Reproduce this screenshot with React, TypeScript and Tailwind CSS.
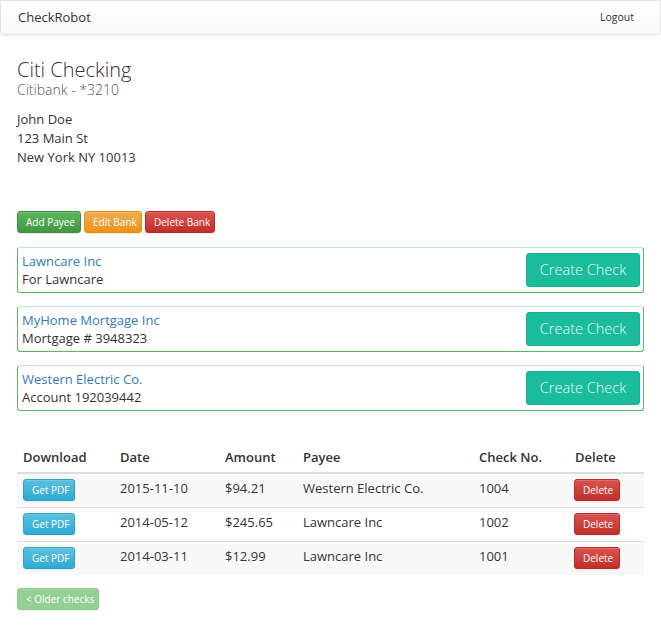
import React from "react";

const payees = [
    { name: "Lawncare Inc", memo: "For Lawncare" },
    { name: "MyHome Mortgage Inc", memo: "Mortgage # 3948323" },
    { name: "Western Electric Co.", memo: "Account 192039442" },
];

const checks = [
    { date: "2015-11-10", amount: "$94.21", payee: "Western Electric Co.", num: "1004" },
    { date: "2014-05-12", amount: "$245.65", payee: "Lawncare Inc", num: "1002" },
    { date: "2014-03-11", amount: "$12.99", payee: "Lawncare Inc", num: "1001" },
];

const btnXs = "h-[22px] px-[8px] text-[10px] leading-none whitespace-nowrap rounded-[3px] border text-white shadow-[inset_0_1px_0_rgba(255,255,255,0.15),0_1px_1px_rgba(0,0,0,0.075)]";

export default function App() {
    return (
        <div className="min-h-[634px] bg-white text-[#333] font-['Open_Sans',sans-serif]">
            {/* Navbar */}
            <div className="h-[35px] flex items-center justify-between border border-[#e2e2e2] rounded-b-[4px] bg-gradient-to-b from-white to-[#f8f8f8] shadow-[0_1px_3px_rgba(0,0,0,0.06)] pl-[17px] pr-[26px]">
                <span className="text-[13px] text-[#333]">CheckRobot</span>
                <span className="text-[10.5px] text-[#333]">Logout</span>
            </div>

            <div className="pl-[17px] pr-[17px]">
                {/* Account heading */}
                <div className="pt-[24px]">
                    <h1 className="text-[20px] font-light leading-[22px] text-[#333]">Citi Checking</h1>
                    <p className="text-[14px] font-light leading-[18px] text-[#5d534c]">Citibank - *3210</p>
                </div>
                <div className="mt-[11px] text-[13px] leading-[19px] text-[#333]">
                    <p>John Doe</p>
                    <p>123 Main St</p>
                    <p>New York NY 10013</p>
                </div>

                {/* Actions */}
                <div className="mt-[44px] flex gap-[3px]">
                    <button className={`${btnXs} bg-gradient-to-b from-[#5cb85c] to-[#419641] border-[#3e8f3e] w-[64px] px-0`}>Add Payee</button>
                    <button className={`${btnXs} bg-gradient-to-b from-[#f0ad4e] to-[#eb9316] border-[#e38d13] w-[58px] px-0`}>Edit Bank</button>
                    <button className={`${btnXs} bg-gradient-to-b from-[#d9534f] to-[#c12e2a] border-[#b92c28] w-[70px] px-0`}>Delete Bank</button>
                </div>

                {/* Payees */}
                <div className="mt-[14px] flex flex-col gap-[13px]">
                    {payees.map((p) => (
                        <div key={p.name} className="h-[46px] flex items-center justify-between border border-[#5cb85c] border-t-[#c3e9d0] rounded-[3px] pl-[4px] pr-[3px]">
                            <div className="text-[13px] leading-[18px]">
                                <p className="text-[#337ab7]">{p.name}</p>
                                <p className="text-[#333]">{p.memo}</p>
                            </div>
                            <button className="h-[34px] w-[114px] rounded-[3px] bg-[#1abc9c] border border-[#19b191] text-[14.5px] font-light text-[#eafaf6]">Create Check</button>
                        </div>
                    ))}
                </div>

                {/* Checks table */}
                <table className="mt-[36px] w-full text-[13px] border-collapse">
                    <thead>
                        <tr className="h-[26px] border-b-2 border-[#ddd] text-left">
                            <th className="w-[97px] pl-[6px] font-semibold align-bottom pb-[5px]">Download</th>
                            <th className="w-[105px] pl-[6px] font-semibold align-bottom pb-[5px]">Date</th>
                            <th className="w-[78px] pl-[6px] font-semibold align-bottom pb-[5px]">Amount</th>
                            <th className="w-[176px] pl-[6px] font-semibold align-bottom pb-[5px]">Payee</th>
                            <th className="w-[96px] pl-[6px] font-semibold align-bottom pb-[5px]">Check No.</th>
                            <th className="pl-[6px] font-semibold align-bottom pb-[5px]">Delete</th>
                        </tr>
                    </thead>
                    <tbody>
                        {checks.map((c, i) => (
                            <tr key={c.num} className={`h-[34px] border-t border-[#ddd] ${i % 2 === 0 ? "bg-[#f9f9f9]" : "bg-white"}`}>
                                <td className="pl-[6px] align-top pt-[5px]">
                                    <button className={`${btnXs} bg-gradient-to-b from-[#5bc0de] to-[#2aabd2] border-[#28a4c9] w-[52px] px-0`}>Get PDF</button>
                                </td>
                                <td className="pl-[6px] align-top pt-[5px]">{c.date}</td>
                                <td className="pl-[6px] align-top pt-[5px]">{c.amount}</td>
                                <td className="pl-[6px] align-top pt-[5px]">{c.payee}</td>
                                <td className="pl-[6px] align-top pt-[5px]">{c.num}</td>
                                <td className="pl-[5px] align-top pt-[5px]">
                                    <button className={`${btnXs} bg-gradient-to-b from-[#d9534f] to-[#c12e2a] border-[#b92c28] w-[46px] px-0`}>Delete</button>
                                </td>
                            </tr>
                        ))}
                    </tbody>
                </table>

                <button className={`${btnXs} mt-[13px] bg-[#5cb85c] border-[#4cae4c] opacity-65 w-[82px] px-0`}>&lt; Older checks</button>
            </div>
        </div>
    );
}
